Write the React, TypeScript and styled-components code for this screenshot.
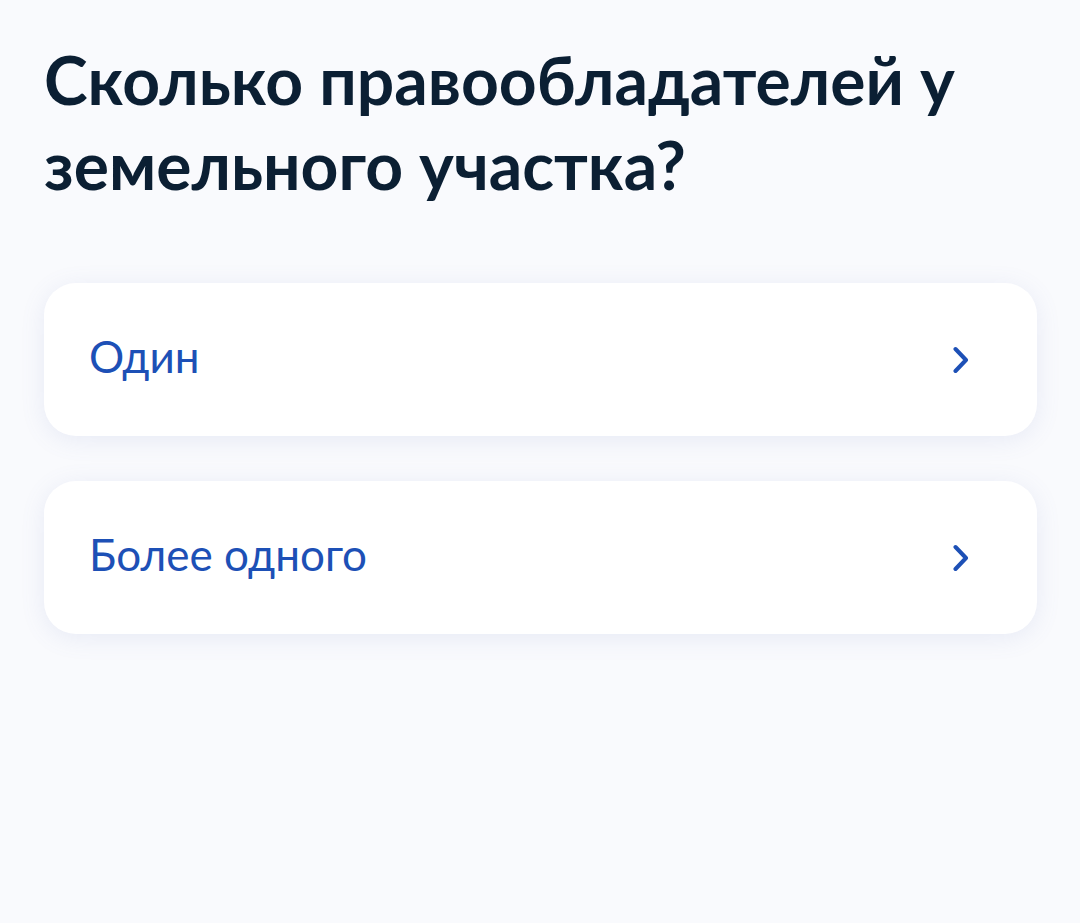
import React from "react";
import styled, { createGlobalStyle } from "styled-components";

const Global = createGlobalStyle`
  html, body { margin: 0; padding: 0; background: #f9fafd; }
  body { font-family: Lato, "Noto Sans", sans-serif; -webkit-font-smoothing: antialiased; }
`;

const Page = styled.main`
  min-height: 923px;
  box-sizing: border-box;
  padding: 37px 43px 0 44px;
  background: #f9fafd;
`;

const Title = styled.h1`
  margin: 0 0 76px;
  font-family: Lato, sans-serif;
  font-weight: 700;
  font-size: 66px;
  line-height: 85px;
  color: #0b1f33;
  letter-spacing: 0;
`;

const List = styled.div`
  display: flex;
  flex-direction: column;
  gap: 45px;
`;

const Option = styled.button`
  display: flex;
  align-items: center;
  justify-content: space-between;
  box-sizing: border-box;
  width: 100%;
  height: 153px;
  padding: 0 68px 0 45px;
  border: none;
  border-radius: 32px;
  background: #ffffff;
  box-shadow: 0 4px 24px rgba(104, 124, 190, 0.12);
  cursor: pointer;
  text-align: left;
`;

const Label = styled.span`
  margin-bottom: 8px;
  font-family: Lato, sans-serif;
  font-weight: 400;
  font-size: 44px;
  line-height: 56px;
  color: #1d50b6;
`;

const Chevron = () => (
  <svg width="16" height="28" viewBox="0 0 16 28" fill="none">
    <path d="M2.5 3 L13 14 L2.5 25" stroke="#1d50b6" strokeWidth="4" strokeLinecap="round" strokeLinejoin="round" />
  </svg>
);

const options = ["Один", "Более одного"];

export default function App() {
  return (
    <>
      <Global />
      <Page>
        <Title>
          Сколько правообладателей у
          <br />
          земельного участка?
        </Title>
        <List>
          {options.map((o) => (
            <Option key={o}>
              <Label>{o}</Label>
              <Chevron />
            </Option>
          ))}
        </List>
      </Page>
    </>
  );
}
